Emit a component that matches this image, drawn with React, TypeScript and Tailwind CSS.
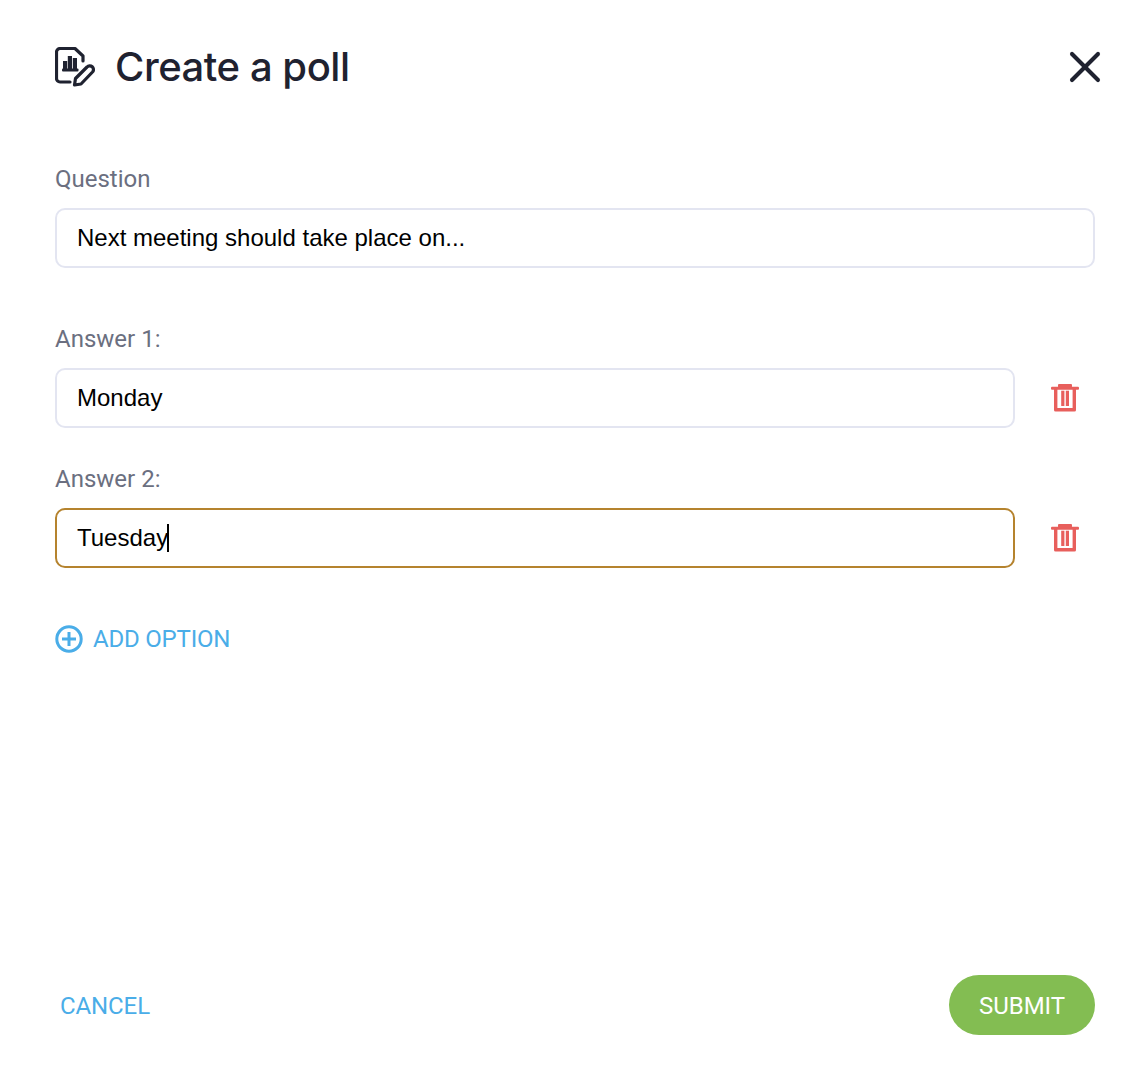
import React from 'react'
import { X } from 'lucide-react'

const PollIcon = () => (
  <svg width="40" height="40" viewBox="0 0 40 40" fill="none" className="shrink-0">
    <path d="M15 35H5a3.5 3.5 0 0 1-3.5-3.5V5A3.5 3.5 0 0 1 5 1.5h15L28 9v5" stroke="#1f2230" strokeWidth="3.2" strokeLinejoin="round" strokeLinecap="round" />
    <rect x="7" y="21.5" width="16.5" height="3" rx="1" fill="#1f2230" />
    <rect x="8" y="14" width="4.2" height="9" fill="#1f2230" />
    <rect x="12.8" y="9" width="4.2" height="14" fill="#1f2230" />
    <rect x="17.8" y="11" width="4.2" height="12" fill="#1f2230" />
    <path d="M19.5 38l1-6.5L32 20a3.6 3.6 0 0 1 5.5 5L26 37z" stroke="#1f2230" strokeWidth="3.2" strokeLinejoin="round" />
  </svg>
)

const TrashIcon = () => (
  <svg width="28" height="28" viewBox="0 0 28 28" fill="#e85f5c">
    <rect x="7" y="0" width="14" height="3.4" rx="1" />
    <rect x="0" y="2.8" width="28" height="3" rx="1" />
    <path d="M3 5h3.4v19h15.2V5H25v21a1.5 1.5 0 0 1-1.5 1.5h-19A1.5 1.5 0 0 1 3 26z" />
    <rect x="10.2" y="6.7" width="3.2" height="15.3" />
    <rect x="14.8" y="6.7" width="3.2" height="15.3" />
  </svg>
)

const PlusCircle = () => (
  <svg width="28" height="28" viewBox="0 0 28 28" fill="none" className="shrink-0">
    <circle cx="14" cy="14" r="12.2" stroke="#4aade8" strokeWidth="3" />
    <path d="M14 7v14M7 14h14" stroke="#4aade8" strokeWidth="3" />
  </svg>
)

const fieldClass =
  "h-[60px] w-full rounded-[10px] border-2 bg-white px-[20px] font-['Liberation_Sans',sans-serif] text-[24px] text-black flex items-center"

const labelClass = "h-[30px] font-['Roboto',sans-serif] text-[24px] leading-[30px] text-[#6b6f80]"

const AnswerRow: React.FC<{ label: string; value: string; focused?: boolean }> = ({ label, value, focused }) => (
  <div className="flex flex-col">
    <div className={labelClass}>{label}</div>
    <div className="mt-[14px] flex items-center">
      <div className={`${fieldClass} ${focused ? 'border-[#b5832e]' : 'border-[#e3e5f1]'}`}>
        <span>{value}</span>
        {focused && <span className="ml-[-1px] h-[28px] w-[2px] bg-black" />}
      </div>
      <div className="flex w-[80px] shrink-0 pl-[36px]">
        <TrashIcon />
      </div>
    </div>
  </div>
)

export default function App() {
  return (
    <div className="flex h-[1084px] w-[1132px] flex-col bg-white pb-[49px] pl-[55px] pr-[37px] pt-[44px]">
      <header className="flex h-[46px] items-center justify-between">
        <div className="flex items-center gap-[20px]">
          <PollIcon />
          <h1 className="font-['Inter',sans-serif] text-[40px] font-[450] leading-[46px] tracking-[-0.45px] text-[#1f2230]">Create a poll</h1>
        </div>
        <X size={52} strokeWidth={1.85} color="#1f2230" className="mr-[-16px]" />
      </header>

      <div className="mt-[74px] flex flex-col">
        <div className={labelClass}>Question</div>
        <div className={`mt-[14px] ${fieldClass} border-[#e3e5f1]`}>Next meeting should take place on...</div>
      </div>

      <div className="mt-[56px] flex flex-col gap-[36px]">
        <AnswerRow label="Answer 1:" value="Monday" />
        <AnswerRow label="Answer 2:" value="Tuesday" focused />
      </div>

      <div className="mt-[57px] flex items-center gap-[10px]">
        <PlusCircle />
        <span className="font-['Roboto',sans-serif] text-[24px] leading-[28px] tracking-[-0.2px] text-[#4aade8]">ADD OPTION</span>
      </div>

      <footer className="mt-auto flex items-center justify-between">
        <button className="ml-[5px] pt-[2px] font-['Roboto',sans-serif] text-[24px] tracking-[-0.1px] text-[#4aade8]">CANCEL</button>
        <button className="h-[60px] w-[146px] rounded-full bg-[#83bd52] pt-[2px] font-['Roboto',sans-serif] text-[24px] text-white">SUBMIT</button>
      </footer>
    </div>
  )
}
